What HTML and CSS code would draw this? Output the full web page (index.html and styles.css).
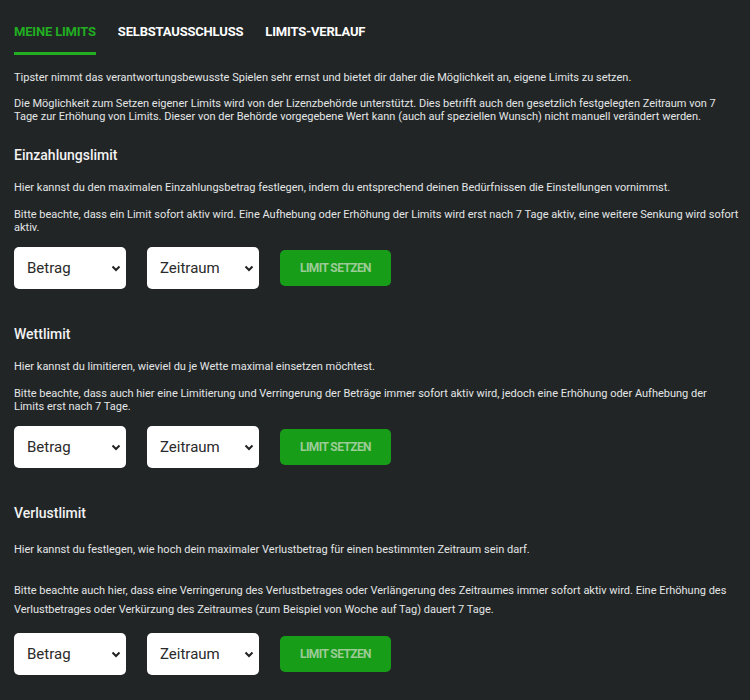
FILE: index.html
```html
<!DOCTYPE html>
<html>
<head>
    <title>Meine Limits</title>
    <meta charset="utf-8">
    <link rel="stylesheet" href="styles.css">
</head>
<body>
    <div class="page">
        <ul class="tabs">
            <li class="active"><a>MEINE LIMITS</a></li>
            <li><a>SELBSTAUSSCHLUSS</a></li>
            <li><a>LIMITS-VERLAUF</a></li>
        </ul>

        <div class="intro">
            <p>Tipster nimmt das verantwortungsbewusste Spielen sehr ernst und bietet dir daher die Möglichkeit an, eigene Limits zu setzen.</p>
            <p>Die Möglichkeit zum Setzen eigener Limits wird von der Lizenzbehörde unterstützt. Dies betrifft auch den gesetzlich festgelegten Zeitraum von 7 Tage zur Erhöhung von Limits. Dieser von der Behörde vorgegebene Wert kann (auch auf speziellen Wunsch) nicht manuell verändert werden.</p>
        </div>

        <div class="limit">
            <h3>Einzahlungslimit</h3>
            <p>Hier kannst du den maximalen Einzahlungsbetrag festlegen, indem du entsprechend deinen Bedürfnissen die Einstellungen vornimmst.</p>
            <p>Bitte beachte, dass ein Limit sofort aktiv wird. Eine Aufhebung oder Erhöhung der Limits wird erst nach 7 Tage aktiv, eine weitere Senkung wird sofort aktiv.</p>
            <div class="controls">
                <div class="select">
                    <select><option>Betrag</option></select>
                    <svg width="10" height="7" viewBox="0 0 10 7"><path d="M1.5 1.5 L5 5 L8.5 1.5" fill="none" stroke="#222" stroke-width="2"/></svg>
                </div>
                <div class="select">
                    <select><option>Zeitraum</option></select>
                    <svg width="10" height="7" viewBox="0 0 10 7"><path d="M1.5 1.5 L5 5 L8.5 1.5" fill="none" stroke="#222" stroke-width="2"/></svg>
                </div>
                <button type="button">LIMIT SETZEN</button>
            </div>
        </div>

        <div class="limit">
            <h3>Wettlimit</h3>
            <p>Hier kannst du limitieren, wieviel du je Wette maximal einsetzen möchtest.</p>
            <p>Bitte beachte, dass auch hier eine Limitierung und Verringerung der Beträge immer sofort aktiv wird, jedoch eine Erhöhung oder Aufhebung der Limits erst nach 7 Tage.</p>
            <div class="controls">
                <div class="select">
                    <select><option>Betrag</option></select>
                    <svg width="10" height="7" viewBox="0 0 10 7"><path d="M1.5 1.5 L5 5 L8.5 1.5" fill="none" stroke="#222" stroke-width="2"/></svg>
                </div>
                <div class="select">
                    <select><option>Zeitraum</option></select>
                    <svg width="10" height="7" viewBox="0 0 10 7"><path d="M1.5 1.5 L5 5 L8.5 1.5" fill="none" stroke="#222" stroke-width="2"/></svg>
                </div>
                <button type="button">LIMIT SETZEN</button>
            </div>
        </div>

        <div class="limit loss">
            <h3>Verlustlimit</h3>
            <p>Hier kannst du festlegen, wie hoch dein maximaler Verlustbetrag für einen bestimmten Zeitraum sein darf.</p>
            <p>Bitte beachte auch hier, dass eine Verringerung des Verlustbetrages oder Verlängerung des Zeitraumes immer sofort aktiv wird. Eine Erhöhung des Verlustbetrages oder Verkürzung des Zeitraumes (zum Beispiel von Woche auf Tag) dauert 7 Tage.</p>
            <div class="controls">
                <div class="select">
                    <select><option>Betrag</option></select>
                    <svg width="10" height="7" viewBox="0 0 10 7"><path d="M1.5 1.5 L5 5 L8.5 1.5" fill="none" stroke="#222" stroke-width="2"/></svg>
                </div>
                <div class="select">
                    <select><option>Zeitraum</option></select>
                    <svg width="10" height="7" viewBox="0 0 10 7"><path d="M1.5 1.5 L5 5 L8.5 1.5" fill="none" stroke="#222" stroke-width="2"/></svg>
                </div>
                <button type="button">LIMIT SETZEN</button>
            </div>
        </div>
    </div>
</body>
</html>
```

FILE: styles.css
```css
html, body {
    margin: 0;
    padding: 0;
    background-color: #212526;
}
body {
    font-family: Roboto, "Liberation Sans", sans-serif;
    color: #e4e6e6;
}
.page {
    padding: 20px 11.5px 0 14px;
}
.tabs {
    list-style-type: none;
    margin: 0;
    padding: 0;
    display: flex;
    gap: 22px;
}
.tabs li a {
    display: block;
    font-size: 13px;
    font-weight: 700;
    letter-spacing: -0.18px;
    color: #ffffff;
    line-height: 24px;
    padding-bottom: 8px;
    border-bottom: 3px solid transparent;
}
.tabs li.active a {
    color: #22ad22;
    border-bottom-color: #22ad22;
}
p {
    margin: 0;
    font-size: 11px;
    line-height: 13px;
}
.intro {
    margin-top: 16px;
}
.intro p + p {
    margin-top: 13px;
}
.limit h3 {
    margin: 23px 0 0;
    font-size: 14px;
    font-weight: 500;
    line-height: 18px;
    color: #f2f2f2;
}
.limit h3 + p {
    margin-top: 17px;
}
.limit p + p {
    margin-top: 14px;
}
.controls {
    display: flex;
    align-items: center;
    gap: 21px;
    margin-top: 13px;
    padding-bottom: 13px;
}
.select {
    position: relative;
    width: 112px;
    height: 42px;
}
.select select {
    appearance: none;
    -webkit-appearance: none;
    width: 100%;
    height: 100%;
    border: 0;
    border-radius: 5px;
    background-color: #ffffff;
    font-family: Roboto, "Liberation Sans", sans-serif;
    font-size: 15px;
    color: #2a2a2a;
    padding: 0 0 0 13px;
    outline: none;
}
.select svg {
    position: absolute;
    right: 5px;
    top: 18px;
    pointer-events: none;
}
button {
    width: 111px;
    height: 36px;
    border: 0;
    border-radius: 5px;
    background-color: #189d18;
    color: #9ccb97;
    font-family: Roboto, "Liberation Sans", sans-serif;
    font-size: 12px;
    font-weight: 700;
    letter-spacing: -0.6px;
}
.loss h3 + p {
    margin-top: 18px;
}
.loss p {
    line-height: 19px;
}
.loss p + p {
    margin-top: 22px;
}
.loss .controls {
    margin-top: 14px;
}
```
